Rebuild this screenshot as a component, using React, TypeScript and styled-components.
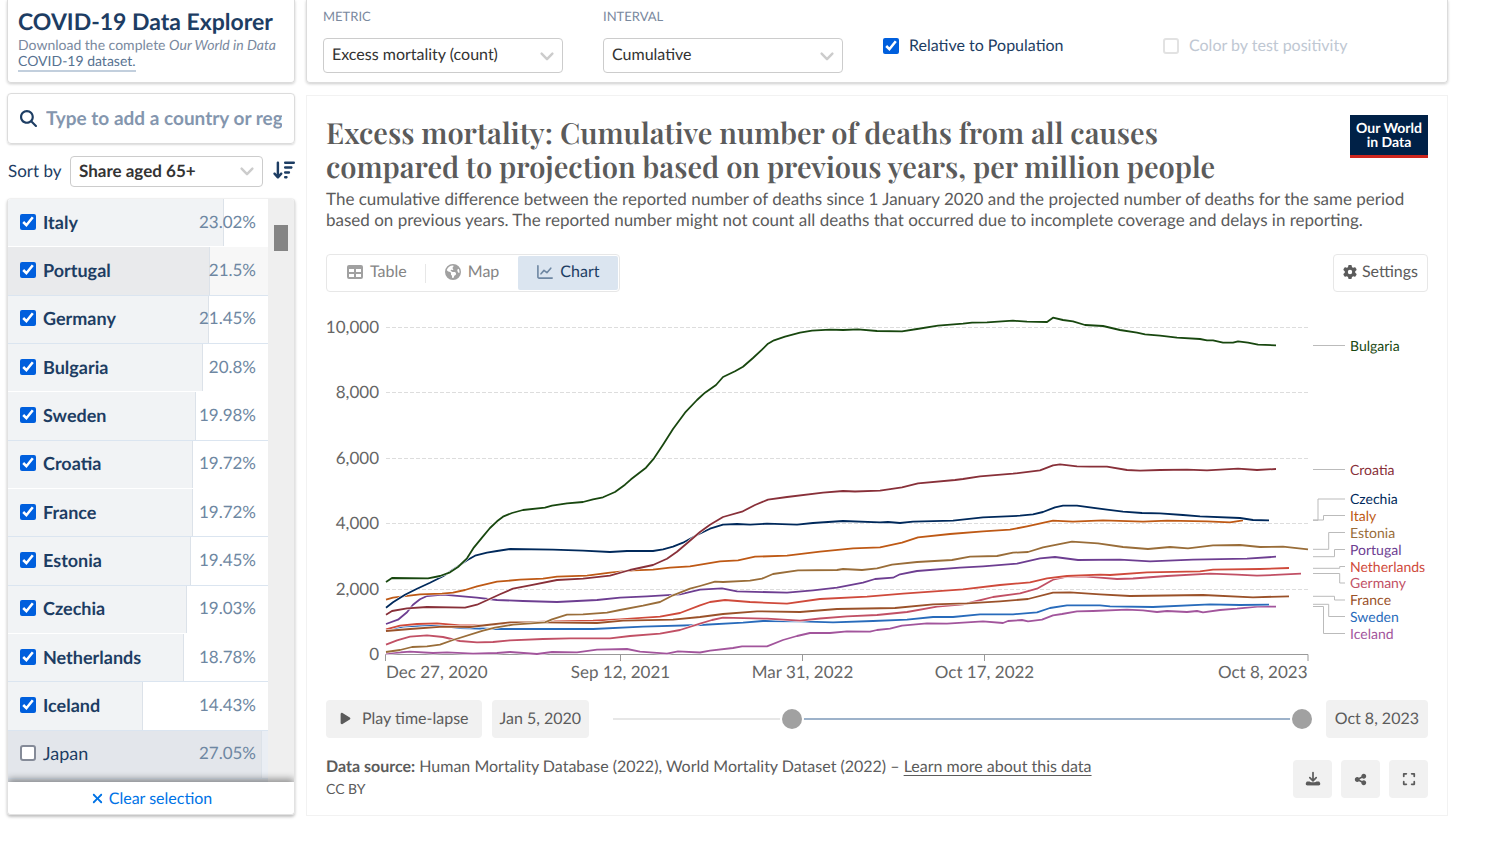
import React from "react";
import styled, { createGlobalStyle } from "styled-components";
import {
  FaArrowDownWideShort,
  FaEarthAmericas,
  FaExpand,
  FaGear,
  FaMagnifyingGlass,
  FaPlay,
  FaShareNodes,
  FaXmark,
} from "react-icons/fa6";

const GlobalStyle = createGlobalStyle`
  *, *::before, *::after { box-sizing: border-box; }
  body {
    margin: 0;
    background: #fff;
    color: #1d3d63;
    font-family: Lato, "Open Sans", sans-serif;
    font-size: 16px;
    text-rendering: geometricPrecision;
  }
  button, input, select { font: inherit; color: inherit; text-rendering: inherit; }
  h1, h2, p, ul { margin: 0; padding: 0; }
`;

const Page = styled.div`
  display: grid;
  grid-template-columns: 288px minmax(0, 1fr);
  column-gap: 11px;
  row-gap: 10px;
  padding: 0 48px 28px 7px;
`;

const HeaderPanel = styled.header`
  height: 83px;
  padding: 8px 10px 0;
  border: 1px solid #dcdcdc;
  border-top: 0;
  border-radius: 0 0 4px 4px;
  box-shadow: 0 1px 3px rgba(0, 0, 0, 0.2);
`;

const ExplorerTitle = styled.h1`
  font-size: 23px;
  line-height: 26px;
  font-weight: 700;
  white-space: nowrap;
`;

const ExplorerNote = styled.p`
  padding-top: 3px;
  font-size: 14px;
  line-height: 16px;
  color: #7a899e;
  white-space: nowrap;
`;

const DatasetLink = styled.a`
  display: inline-block;
  height: 19px;
  color: #577291;
  text-decoration: none;
  border-bottom: 2px solid #c2cfdd;
`;

const ControlsPanel = styled(HeaderPanel).attrs({ as: "section" })`
  display: grid;
  grid-template-columns: repeat(4, 240px);
  align-items: start;
  column-gap: 40px;
  padding: 8px 16px 0;
`;

const Field = styled.label`
  display: flex;
  flex-direction: column;
  gap: 14px;
  font-size: 13px;
  line-height: 16px;
  color: #7a899e;
`;

const SelectWrap = styled.span`
  position: relative;
  display: block;
  flex: 1;
  svg {
    position: absolute;
    right: 8px;
    top: 50%;
    margin-top: -5px;
    pointer-events: none;
  }
`;

const Select = styled.select<{ $height: number; $bold?: boolean }>`
  display: block;
  width: 100%;
  height: ${(p) => p.$height}px;
  padding: 0 28px 2px 8px;
  appearance: none;
  border: 1px solid #ccc;
  border-radius: 4px;
  background: #fff;
  color: #333;
  font-size: ${(p) => (p.$bold ? 17 : 16)}px;
  font-weight: ${(p) => (p.$bold ? 700 : 400)};
`;

const CheckLabel = styled.label<{ $disabled?: boolean }>`
  display: flex;
  gap: 10px;
  height: 20px;
  margin-top: 28px;
  align-items: center;
  line-height: 18px;
  color: ${(p) => (p.$disabled ? "#c0c8d3" : "#1d3d63")};
`;

const Checkbox = styled.input.attrs({ type: "checkbox" })`
  flex: none;
  width: 16px;
  height: 16px;
  margin: 0;
  accent-color: #005fdd;
  &:not(:checked) {
    appearance: none;
    border: 2px solid ${(p) => (p.disabled ? "#e2e2e2" : "#858b98")};
    border-radius: 3px;
    background: #fff;
  }
`;

const Sidebar = styled.aside`
  display: flex;
  flex-direction: column;
  gap: 12px;
`;

const SearchBox = styled.label`
  display: flex;
  align-items: center;
  gap: 9px;
  height: 51px;
  padding: 0 12px;
  border: 1px solid #dcdcdc;
  border-radius: 4px;
  box-shadow: 0 1px 2px rgba(0, 0, 0, 0.15);
`;

const SearchInput = styled.input`
  flex: 1;
  min-width: 0;
  padding: 0;
  border: 0;
  outline: 0;
  font-size: 19px;
  font-weight: 700;
  &::placeholder {
    color: #8496ae;
    opacity: 1;
  }
`;

const SortRow = styled.div`
  display: flex;
  align-items: center;
  height: 30px;
  padding-left: 1px;
  label {
    width: 62px;
    padding-bottom: 2px;
    font-size: 17px;
  }
`;

const SortButton = styled.button`
  display: flex;
  margin-left: 10px;
  padding: 0 0 3px;
  border: 0;
  background: none;
`;

const EntityPanel = styled.section`
  display: flex;
  flex-direction: column;
  height: 617px;
  border: 1px solid #e2e2e2;
  border-top-color: #f0f0f0;
  border-radius: 4px;
  box-shadow: 0 2px 3px rgba(0, 0, 0, 0.25);
  overflow: hidden;
`;

const EntityScroller = styled.div`
  display: flex;
  flex: 1;
  min-height: 0;
`;

const EntityList = styled.ul`
  display: flex;
  flex: 1;
  flex-direction: column;
  list-style: none;
`;

const ROW_LINE = "#dbe5f0";

const EntityRow = styled.li<{ $line: boolean; $tone: "plain" | "hover" | "muted" }>`
  position: relative;
  flex: 1;
  background: ${(p) => ({ plain: "#fff", hover: "#f7f7f7", muted: "#eaeef4" })[p.$tone]};
  border-bottom: 1px solid ${(p) => (p.$line ? ROW_LINE : "#fff")};
`;

const EntityBar = styled.span<{ $tone: "plain" | "hover" | "muted" }>`
  position: absolute;
  inset: 0 auto 0 0;
  border-right: 1px solid #dce2e9;
  background: ${(p) => ({ plain: "#f1f3f5", hover: "#e9eaec", muted: "#e3e6eb" })[p.$tone]};
`;

const EntityLabel = styled.label<{ $selected: boolean }>`
  position: relative;
  display: flex;
  align-items: center;
  gap: 7px;
  height: 100%;
  padding: 0 12px 2px;
  font-size: 18px;
  line-height: 24px;
  font-weight: ${(p) => (p.$selected ? 700 : 400)};
`;

const EntityValue = styled.span`
  margin-left: auto;
  font-size: 17px;
  font-weight: 400;
  color: #6e87a2;
`;

const PartialRow = styled.li`
  height: 3px;
  background: #e0e4ea;
`;

const ScrollTrack = styled.div`
  width: 26px;
  padding: 26px 6px 0;
  background: #efefef;
`;

const ScrollThumb = styled.div`
  height: 26px;
  background: #858585;
`;

const ClearButton = styled.button`
  display: flex;
  align-items: center;
  justify-content: center;
  gap: 4px;
  height: 32px;
  border: 0;
  background: #fff;
  color: #0073e6;
  box-shadow: 0 -3px 7px rgba(0, 0, 0, 0.4);
  z-index: 1;
`;

const Grapher = styled.main`
  display: flex;
  flex-direction: column;
  margin-top: 2px;
  padding: 19px 19px 15px;
  border: 1px solid #f2f2f2;
  color: #5b5b5b;
`;

const GrapherHeader = styled.div`
  display: flex;
  justify-content: space-between;
`;

const ChartTitle = styled.h2`
  padding-top: 1px;
  font-family: "Playfair Display", "Liberation Serif", serif;
  font-size: 29px;
  line-height: 34px;
  font-weight: 600;
  white-space: nowrap;
`;

const Subtitle = styled.p`
  padding-top: 4px;
  font-size: 17px;
  line-height: 21px;
`;

const Logo = styled.a`
  flex: none;
  width: 78px;
  height: 43px;
  padding-top: 6px;
  border-bottom: 3px solid #ce261e;
  background: #002147;
  color: #fff;
  font-size: 14px;
  line-height: 14px;
  font-weight: 700;
  text-align: center;
  text-decoration: none;
`;

const TabRow = styled.div`
  display: flex;
  justify-content: space-between;
  margin-top: 24px;
`;

const Tabs = styled.div`
  display: flex;
  height: 38px;
  padding: 1px;
  border: 1px solid #e7e7e7;
  border-radius: 4px;
`;

const Tab = styled.button<{ $active?: boolean; $divided?: boolean }>`
  position: relative;
  display: flex;
  align-items: center;
  gap: 7px;
  padding: 0 19px 3px;
  border: 0;
  border-radius: 2px;
  background: ${(p) => (p.$active ? "#dbe5f0" : "none")};
  color: ${(p) => (p.$active ? "#1d3d63" : "#858585")};
  svg {
    color: ${(p) => (p.$active ? "#6e87a2" : "#a1a1a1")};
  }
  &::after {
    content: "";
    position: absolute;
    right: 0;
    top: 8px;
    width: 1px;
    height: 19px;
    background: ${(p) => (p.$divided ? "#e7e7e7" : "none")};
  }
`;

const SettingsButton = styled.button`
  display: flex;
  align-items: center;
  gap: 5px;
  height: 38px;
  padding: 0 9px 3px;
  border: 1px solid #e7e7e7;
  border-radius: 4px;
  background: #fff;
`;

const Chart = styled.svg`
  display: block;
  width: 100%;
  height: auto;
  margin-top: 14px;
  font-family: Lato, "Open Sans", sans-serif;
`;

const TimelineRow = styled.div`
  display: flex;
  align-items: center;
  margin-top: 15px;
`;

const GreyButton = styled.button<{ $gap?: number; $pad: number }>`
  display: flex;
  align-items: center;
  justify-content: center;
  gap: 10px;
  height: 38px;
  margin-left: ${(p) => p.$gap ?? 0}px;
  padding: 0 ${(p) => p.$pad}px 1px;
  border: 0;
  border-radius: 4px;
  background: #f1f1f1;
  white-space: nowrap;
`;

const Timeline = styled.div`
  position: relative;
  flex: 1;
  height: 20px;
  margin: 0 14px;
`;

const TimelineTrack = styled.div`
  position: absolute;
  inset: 9px 10px;
  background: #e7e7e7;
`;

const TimelineRange = styled.div`
  height: 100%;
  background: #9db2ca;
`;

const RangeInput = styled.input.attrs({ type: "range" })`
  position: absolute;
  inset: 0;
  width: 100%;
  height: 20px;
  margin: 0;
  appearance: none;
  background: none;
  pointer-events: none;
  &::-webkit-slider-thumb {
    appearance: none;
    width: 20px;
    height: 20px;
    border-radius: 50%;
    background: #a1a1a1;
    box-shadow: 0 0 0 2px #fff;
    pointer-events: auto;
  }
`;

const Footer = styled.footer`
  display: flex;
  justify-content: space-between;
  margin-top: 17px;
`;

const Sources = styled.div`
  line-height: 23px;
  a {
    color: inherit;
    text-underline-offset: 3px;
  }
`;

const License = styled.p`
  font-size: 14px;
  line-height: 22px;
`;

const Actions = styled.div`
  display: flex;
  gap: 9px;
  margin-top: 5px;
`;

const IconButton = styled.button`
  display: flex;
  align-items: center;
  justify-content: center;
  width: 39px;
  height: 38px;
  padding: 0;
  border: 0;
  border-radius: 4px;
  background: #f1f1f1;
`;

const Chevron = () => (
  <svg width="16" height="11" viewBox="0 0 16 11" fill="none" stroke="#ccc" strokeWidth="2.4" strokeLinecap="round" strokeLinejoin="round">
    <path d="M2.6 2.6 8 8.2l5.4-5.6" />
  </svg>
);

const TableIcon = () => (
  <svg width="16" height="16" viewBox="0 0 16 16" fill="currentColor" fillRule="evenodd">
    <path d="M2 1h12a2 2 0 0 1 2 2v10a2 2 0 0 1-2 2H2a2 2 0 0 1-2-2V3a2 2 0 0 1 2-2zM2 5v3h5V5zM9 5v3h5V5zM2 10v3h5v-3zM9 10v3h5v-3z" />
  </svg>
);

const LineIcon = () => (
  <svg width="16" height="16" viewBox="0 0 16 16" fill="none" stroke="currentColor" strokeWidth="1.6" strokeLinecap="round" strokeLinejoin="round">
    <path d="M.9 1.8v11.1a1.2 1.2 0 0 0 1.2 1.2H15.2" />
    <path d="M4 9.8 7 6.4l2.9 2.3 3.9-4.5" />
  </svg>
);

const DownloadIcon = () => (
  <svg width="16" height="16" viewBox="0 0 16 16" fill="none" stroke="#5b5b5b" strokeWidth="1.7" strokeLinecap="round" strokeLinejoin="round">
    <path d="M8 1.5v8M4.8 6.6 8 9.8l3.2-3.2" />
    <path d="M2.3 10.5h2.3L8 13l3.4-2.5h2.3a1 1 0 0 1 1 1v1.7a1 1 0 0 1-1 1H2.3a1 1 0 0 1-1-1v-1.7a1 1 0 0 1 1-1z" fill="#5b5b5b" stroke="none" />
    <path d="M2.2 12.7h11.6" strokeWidth="3" />
  </svg>
);

type Entity = { name: string; share: string; line: boolean; selected: boolean; tone: "plain" | "hover" | "muted" };

const row = (name: string, share: string, line: boolean, tone: Entity["tone"] = "plain", selected = true): Entity => ({
  name,
  share,
  line,
  selected,
  tone,
});

const entities: Entity[] = [
  row("Italy", "23.02", false),
  row("Portugal", "21.5", true, "hover"),
  row("Germany", "21.45", true),
  row("Bulgaria", "20.8", false),
  row("Sweden", "19.98", true),
  row("Croatia", "19.72", false),
  row("France", "19.72", true),
  row("Estonia", "19.45", true),
  row("Czechia", "19.03", false),
  row("Netherlands", "18.78", true),
  row("Iceland", "14.43", true),
  row("Japan", "27.05", true, "muted", false),
];

const SHARE_SCALE = 27.7;

type Series = { name: string; color: string; labelY: number; link: string; points: string };

const series: Series[] = [
  {
    name: "Iceland",
    color: "#a2559c",
    labelY: 639,
    link: "M1313 606.5H1323.5V633.5H1345",
    points:
      "386,653.5 410,651.7 433,653 447,652.3 473,653.7 497,653 510,652 537,654 552,652 577,652.3 597,649.7 627,649 640,651.7 667,653.7 678,651.3 700,652.5 710,650.7 733,648 742,646.3 767,646.3 783,640 797,636 810,633 830,633 847,631.3 870,631.7 877,630 890,628.7 902,625.7 927,623.3 947,623.7 983,621.3 1003,623 1008,621 1022,620 1028,621.3 1042,619.7 1053,615.3 1062,614 1077,611.3 1093,611 1127,609.7 1143,610.3 1157,612 1167,611 1187,612 1197,611 1203,612.3 1220,610 1237,608.7 1260,606.3 1276,606.7",
  },
  {
    name: "Sweden",
    color: "#286bbb",
    labelY: 622,
    link: "M1313 604.3H1328.7V616.5H1345",
    points:
      "386,630.7 403,626.7 427,625.3 443,626 460,628 497,629 593,629 643,626.7 700,625 743,622.7 763,621 800,621.3 833,622.3 873,621 907,619.7 933,617 953,617 980,614.3 1013,614.3 1037,612.3 1050,608 1067,605.3 1100,605.3 1110,606.3 1153,607 1210,604.3 1240,605 1269,604.7",
  },
  {
    name: "Germany",
    color: "#c15065",
    labelY: 588,
    link: "M1313 573.5H1339.7V583H1345",
    points:
      "386,644.7 397,640.3 410,636.7 427,635.3 443,637 460,641 477,642.3 493,642 510,640.3 543,639 570,638.3 610,638.3 630,636 660,633.7 680,630 700,623.7 712,620 723,617.7 767,618.7 800,620.7 820,618.5 847,616.3 877,615 907,612 937,606.7 963,604.3 977,601 993,597 1020,593.3 1037,588.7 1053,579.7 1067,576.7 1083,576.3 1100,577.7 1117,579 1133,578.5 1167,576 1210,573.7 1237,574.7 1257,575.7 1280,574.7 1301,573.7",
  },
  {
    name: "Netherlands",
    color: "#cf4a3b",
    labelY: 572,
    link: "M1313 568.3H1339.7V566.5H1345",
    points:
      "386,629.3 400,625.7 417,624 437,623.3 460,625.3 483,625.3 510,623 543,621.7 593,620.7 620,619.3 660,616.7 680,613 700,605.3 710,602 725,600 750,602 787,603.7 820,599 867,596.7 903,593.7 963,589.3 1000,585 1030,582.3 1047,578.3 1067,576 1100,574.7 1110,575 1147,572.3 1200,571.3 1213,569.7 1260,569 1289,568",
  },
  {
    name: "France",
    color: "#9a5129",
    labelY: 605,
    link: "M1313 596.3H1334.5V600H1345",
    points:
      "386,631 410,629 443,626.7 470,627 487,625 510,622.3 543,622.3 597,623 623,620.7 673,619.7 700,617 723,614 757,611.3 800,612 837,609 895,608 933,604.3 967,603.3 1000,601.3 1028,599 1053,592.7 1070,592.3 1100,594.3 1130,596 1203,595 1253,597.3 1289,596.3",
  },
  {
    name: "Portugal",
    color: "#6d3e91",
    labelY: 555,
    link: "M1313 556.7H1334.5V549.5H1345",
    points:
      "386,624 398,619.7 407,612.3 413,604.7 420,599.3 427,596 443,594.7 477,597.7 497,600 523,601 557,602 597,600 620,597.7 647,596.3 680,594.3 700,589.7 722,588.3 737,591.3 787,592.7 813,590.3 837,587.7 863,582.7 875,579 893,577.7 900,574.3 917,571 960,567.7 983,566.3 1017,563.7 1040,558.3 1055,557 1078,560 1120,559.7 1150,561.3 1193,559.7 1247,558.7 1276,556.7",
  },
  {
    name: "Estonia",
    color: "#996d39",
    labelY: 538,
    link: "M1313 549.3H1328.7V532.5H1345",
    points:
      "386,652 400,650 412,647 427,646.3 440,644.7 453,640 483,630.7 495,627.7 513,624.7 545,622.3 552,619.3 567,614.7 583,614.3 607,612.7 620,610 643,605.7 660,602 673,595.3 690,588.7 700,586 715,581.7 723,582 750,580.7 762,578.7 773,574 798,570.3 837,570 843,569 862,570 877,568.3 892,564.7 917,562 952,560 970,556.7 997,556 1013,552.7 1028,552 1043,547.3 1072,541.7 1098,543.3 1123,547 1148,549 1170,547 1188,548.3 1213,545.3 1240,545 1260,547 1283,546.7 1308,549.3",
  },
  {
    name: "Italy",
    color: "#be5915",
    labelY: 521,
    link: "M1313 520H1323.5V515.5H1345",
    points:
      "386,599.7 393,597.7 403,596.3 420,594.3 442,593.7 453,592.7 465,590 477,586.3 497,581.7 520,579.7 543,578.7 557,576.7 587,575.7 610,572.7 633,570.3 653,569.7 670,567.7 690,566.3 720,561.3 738,560.3 755,556.7 787,555.7 820,551.7 853,548.3 880,547.3 902,542.7 918,537.3 950,534 983,531.3 1010,529.7 1027,526.3 1053,520.7 1073,521.7 1103,520.3 1143,521.7 1167,520.7 1207,521.3 1230,522.3 1243,520.3",
  },
  {
    name: "Czechia",
    color: "#00295b",
    labelY: 504,
    link: "M1313 520.3H1318V499H1345",
    points:
      "386,607.7 393,602.3 405,594.7 417,588.7 430,582.7 443,576.3 457,567 467,560.3 475,555.7 487,552.7 497,551 510,549 553,549.7 583,550.7 610,552 627,551 653,551 663,549.3 673,546.7 683,542.7 697,535 710,528.7 723,524.7 737,524 750,524.7 767,523.7 797,524.7 813,523 843,521 880,522.3 888,522 900,523 913,521.7 953,520.7 983,517.3 1020,515.7 1033,514.3 1043,512 1055,507.3 1063,505.7 1077,505.7 1107,509.7 1123,511.7 1142,513 1160,513.3 1183,515 1200,516.3 1240,518 1253,520 1269,520.3",
  },
  {
    name: "Croatia",
    color: "#883039",
    labelY: 475,
    link: "M1313 469.5H1345",
    points:
      "386,614.7 392,611 407,608.3 427,607 465,607.7 477,604.7 488,599.7 500,594.3 513,588.7 530,585.3 557,580 583,578.7 610,575.7 630,570 653,565 667,558.7 677,551.7 687,543.3 700,532 710,524.7 723,517 742,511.7 755,505 768,499.7 787,497 823,492.7 843,491 855,491.5 880,490.7 902,487.3 918,483.3 955,480 963,479 980,476.3 1013,473.7 1040,470.3 1053,465.3 1060,464.3 1077,466.3 1090,466.7 1107,466.7 1127,470 1140,470.7 1160,470 1187,469.7 1207,470.3 1238,468.7 1257,470 1276,469",
  },
  {
    name: "Bulgaria",
    color: "#18470f",
    labelY: 351,
    link: "M1313 345.5H1345",
    points:
      "386,582 392,578 428,578.3 440,576 450,572.3 458,567 467,558.3 474,547.3 482,537.7 490,528 497,521.3 503,516.7 512,513 523,510 545,507.7 552,505.7 567,503.3 583,502 593,499.3 603,497.3 615,492 625,484.7 631,479.3 646,467.7 654,458.3 663,444.7 673,429 685,412.7 697,400 705,392.7 716,385 723,377 735,371.3 743,366.7 753,358 762,349.7 768,343.7 774,340.3 785,336.7 800,332.7 812,330.7 830,329.7 843,330 858,329.3 877,331 902,331.3 917,329 938,325.7 963,323.7 972,322.7 987,322.3 1013,320.7 1027,321.7 1047,322 1053,317.7 1063,320 1073,321.3 1085,325 1103,326 1120,330 1137,332.7 1145,334.3 1160,335.7 1177,337.7 1200,339 1207,340.3 1213,340.3 1223,342.7 1233,342.7 1238,341.3 1248,342.7 1258,344.7 1276,345.3",
  },
];

const yTicks = [
  { label: "10,000", y: 327.5 },
  { label: "8,000", y: 392.5 },
  { label: "6,000", y: 458.5 },
  { label: "4,000", y: 523.5 },
  { label: "2,000", y: 589.5 },
];

const xTicks: { label: string; x: number; anchor: "start" | "middle" | "end" }[] = [
  { label: "Dec 27, 2020", x: 386, anchor: "start" },
  { label: "Sep 12, 2021", x: 620.5, anchor: "middle" },
  { label: "Mar 31, 2022", x: 802.5, anchor: "middle" },
  { label: "Oct 17, 2022", x: 984.5, anchor: "middle" },
  { label: "Oct 8, 2023", x: 1307.5, anchor: "end" },
];

const LineChart = () => (
  <Chart viewBox="326 306 1102 379" role="img" aria-label="Cumulative excess deaths per million people by country">
    <g fontSize="17" fill="#666">
      {yTicks.map((t) => (
        <g key={t.label}>
          <path d={`M386 ${t.y}H1308`} stroke="#ddd" strokeDasharray="4 2" />
          <text x="379" y={t.y + 5.5} textAnchor="end">
            {t.label}
          </text>
        </g>
      ))}
      <text x="379" y="660" textAnchor="end">
        0
      </text>
      {xTicks.map((t) => (
        <text key={t.label} x={t.x} y="678" textAnchor={t.anchor}>
          {t.label}
        </text>
      ))}
    </g>
    <path d="M385.5 661V654.5H1308V661M620.5 654.5V661M802.5 654.5V661M984.5 654.5V661" fill="none" stroke="#999" />
    {series.map((s) => (
      <g key={s.name} fill="none" strokeLinejoin="round">
        <polyline points={s.points} stroke="#fff" strokeWidth="2.8" />
        <polyline points={s.points} stroke={s.color} strokeWidth="1.8" />
        <path d={s.link} stroke="#bbb" />
        <text x="1350" y={s.labelY} fontSize="14" fill={s.color}>
          {s.name}
        </text>
      </g>
    ))}
  </Chart>
);

const TIMELINE_DAYS = 1372;
const START_DAY = 357;

export default function App() {
  return (
    <>
      <GlobalStyle />
      <Page>
        <HeaderPanel>
          <ExplorerTitle>COVID-19 Data Explorer</ExplorerTitle>
          <ExplorerNote>
            Download the complete <em>Our World in Data</em>
            <br />
            <DatasetLink href="#dataset">COVID-19 dataset.</DatasetLink>
          </ExplorerNote>
        </HeaderPanel>

        <ControlsPanel>
          <Field>
            METRIC
            <SelectWrap>
              <Select $height={35}>
                <option>Excess mortality (count)</option>
              </Select>
              <Chevron />
            </SelectWrap>
          </Field>
          <Field>
            INTERVAL
            <SelectWrap>
              <Select $height={35}>
                <option>Cumulative</option>
              </Select>
              <Chevron />
            </SelectWrap>
          </Field>
          <CheckLabel>
            <Checkbox defaultChecked />
            Relative to Population
          </CheckLabel>
          <CheckLabel $disabled>
            <Checkbox disabled />
            Color by test positivity
          </CheckLabel>
        </ControlsPanel>

        <Sidebar>
          <SearchBox>
            <FaMagnifyingGlass size={17} />
            <SearchInput aria-label="Add a country or region" placeholder="Type to add a country or region..." />
          </SearchBox>
          <SortRow>
            <label htmlFor="sort">Sort by</label>
            <SelectWrap>
              <Select id="sort" $height={31} $bold>
                <option>Share aged 65+</option>
              </Select>
              <Chevron />
            </SelectWrap>
            <SortButton aria-label="Sort descending">
              <FaArrowDownWideShort size={22} />
            </SortButton>
          </SortRow>
          <EntityPanel>
            <EntityScroller>
              <EntityList>
                {entities.map((e) => (
                  <EntityRow key={e.name} $line={e.line} $tone={e.tone}>
                    <EntityBar $tone={e.tone} style={{ width: `${(Number(e.share) / SHARE_SCALE) * 100}%` }} />
                    <EntityLabel $selected={e.selected}>
                      <Checkbox defaultChecked={e.selected} />
                      {e.name}
                      <EntityValue>{e.share}%</EntityValue>
                    </EntityLabel>
                  </EntityRow>
                ))}
                <PartialRow />
              </EntityList>
              <ScrollTrack>
                <ScrollThumb />
              </ScrollTrack>
            </EntityScroller>
            <ClearButton>
              <FaXmark size={15} />
              Clear selection
            </ClearButton>
          </EntityPanel>
        </Sidebar>

        <Grapher>
          <GrapherHeader>
            <ChartTitle>
              Excess mortality: Cumulative number of deaths from all causes
              <br />
              compared to projection based on previous years, per million people
            </ChartTitle>
            <Logo href="#home">
              Our World
              <br />
              in Data
            </Logo>
          </GrapherHeader>
          <Subtitle>
            The cumulative difference between the reported number of deaths since 1 January 2020 and the projected number of deaths for the same period
            based on previous years. The reported number might not count all deaths that occurred due to incomplete coverage and delays in reporting.
          </Subtitle>
          <TabRow>
            <Tabs>
              <Tab $divided>
                <TableIcon />
                Table
              </Tab>
              <Tab>
                <FaEarthAmericas size={16} />
                Map
              </Tab>
              <Tab $active>
                <LineIcon />
                Chart
              </Tab>
            </Tabs>
            <SettingsButton>
              <FaGear size={14} />
              Settings
            </SettingsButton>
          </TabRow>
          <LineChart />
          <TimelineRow>
            <GreyButton $pad={13}>
              <FaPlay size={13} />
              Play time-lapse
            </GreyButton>
            <GreyButton $pad={8} $gap={10}>
              Jan 5, 2020
            </GreyButton>
            <Timeline>
              <TimelineTrack>
                <TimelineRange style={{ marginLeft: `${(START_DAY / TIMELINE_DAYS) * 100}%` }} />
              </TimelineTrack>
              <RangeInput aria-label="Start date" min={0} max={TIMELINE_DAYS} defaultValue={START_DAY} />
              <RangeInput aria-label="End date" min={0} max={TIMELINE_DAYS} defaultValue={TIMELINE_DAYS} />
            </Timeline>
            <GreyButton $pad={9}>Oct 8, 2023</GreyButton>
          </TimelineRow>
          <Footer>
            <Sources>
              <p>
                <strong>Data source:</strong> Human Mortality Database (2022), World Mortality Dataset (2022) –{" "}
                <a href="#sources">Learn more about this data</a>
              </p>
              <License>CC BY</License>
            </Sources>
            <Actions>
              <IconButton aria-label="Download">
                <DownloadIcon />
              </IconButton>
              <IconButton aria-label="Share">
                <FaShareNodes size={13} />
              </IconButton>
              <IconButton aria-label="Enter full-screen">
                <FaExpand size={14} />
              </IconButton>
            </Actions>
          </Footer>
        </Grapher>
      </Page>
    </>
  );
}
